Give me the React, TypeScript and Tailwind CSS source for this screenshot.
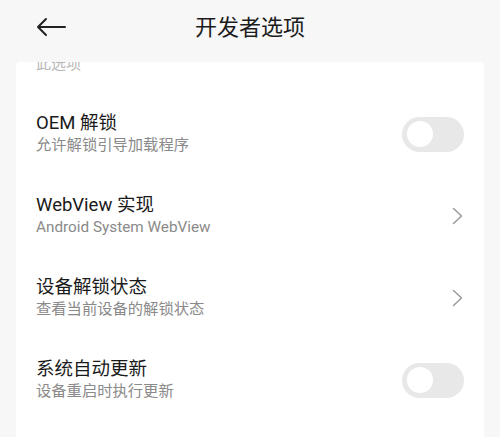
import React from "react"

type Row = {
  title: string
  desc: string
  kind: "toggle" | "link"
}

const rows: Row[] = [
  { title: "OEM 解锁", desc: "允许解锁引导加载程序", kind: "toggle" },
  { title: "WebView 实现", desc: "Android System WebView", kind: "link" },
  { title: "设备解锁状态", desc: "查看当前设备的解锁状态", kind: "link" },
  { title: "系统自动更新", desc: "设备重启时执行更新", kind: "toggle" },
]

const font = {
  fontFamily: '"Roboto", "Noto Sans CJK SC", sans-serif',
}

function Toggle() {
  return (
    <div className="w-[62px] h-[35px] rounded-full bg-[#e8e8e8] flex items-center px-[5px]">
      <div className="w-[26px] h-[26px] rounded-full bg-white" />
    </div>
  )
}

function Chevron() {
  return (
    <svg width="11" height="18" viewBox="0 0 11 18" className="mr-[1px]">
      <path d="M1.5 1.5 L9.5 9 L1.5 16.5" fill="none" stroke="#9a9a9a" strokeWidth="1.5" strokeLinecap="round" strokeLinejoin="round" />
    </svg>
  )
}

export default function App() {
  return (
    <div className="w-[500px] h-[437px] overflow-hidden bg-[#f7f7f7] flex flex-col" style={font}>
      <div className="h-[62px] shrink-0 relative flex items-center justify-center">
        <svg width="30" height="20" viewBox="0 0 30 20" className="absolute left-[36px] top-[17px]">
          <path d="M29 10 H2 M10 2 L2 10 L10 18" fill="none" stroke="#222" strokeWidth="2" strokeLinecap="round" strokeLinejoin="round" />
        </svg>
        <span className="text-[22px] text-[#1c1c1c] leading-none -mt-[6px]">开发者选项</span>
      </div>

      <div className="mx-[16px] flex-1 bg-white rounded-t-[4px]">
        <div className="h-[31px]">
          <div className="h-[9px] overflow-hidden flex items-end pl-[20px]">
            <span className="text-[15px] leading-[22px] text-[#b8b8b8] -mb-[4px]">此选项</span>
          </div>
        </div>

        {rows.map((row) => (
          <div key={row.title} className="h-[82px] flex items-center justify-between pl-[20px] pr-[20px]">
            <div className="flex flex-col">
              <span className="text-[18.5px] leading-[22px] text-[#1a1a1a]">{row.title}</span>
              <span className="text-[15.3px] leading-[22px] text-[#8a8a8a]">{row.desc}</span>
            </div>
            {row.kind === "toggle" ? <Toggle /> : <Chevron />}
          </div>
        ))}
      </div>
    </div>
  )
}
